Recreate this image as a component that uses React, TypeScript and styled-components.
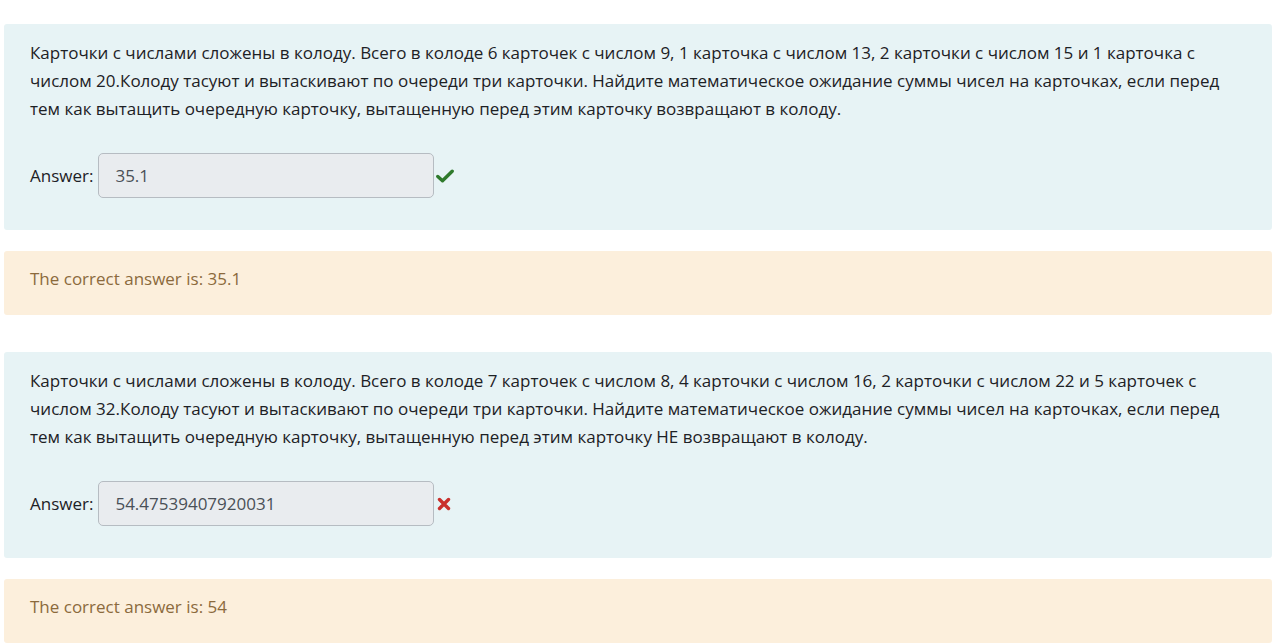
import React from 'react'
import styled, { createGlobalStyle } from 'styled-components'

const GlobalStyle = createGlobalStyle`
  html, body {
    margin: 0;
    padding: 0;
    background: #ffffff;
  }
  body {
    font-family: 'Open Sans', 'Noto Sans', 'Liberation Sans', sans-serif;
    font-size: 17px;
    color: #1d2125;
  }
`

interface QuestionProps {
  text: string
  answer: string
  correct: boolean
  rightAnswer: string
}

const questions: QuestionProps[] = [
  {
    text:
      'Карточки с числами сложены в колоду. Всего в колоде 6 карточек с числом 9, 1 карточка с числом 13, 2 карточки с числом 15 и 1 карточка с числом 20.Колоду тасуют и вытаскивают по очереди три карточки. Найдите математическое ожидание суммы чисел на карточках, если перед тем как вытащить очередную карточку, вытащенную перед этим карточку возвращают в колоду.',
    answer: '35.1',
    correct: true,
    rightAnswer: '35.1',
  },
  {
    text:
      'Карточки с числами сложены в колоду. Всего в колоде 7 карточек с числом 8, 4 карточки с числом 16, 2 карточки с числом 22 и 5 карточек с числом 32.Колоду тасуют и вытаскивают по очереди три карточки. Найдите математическое ожидание суммы чисел на карточках, если перед тем как вытащить очередную карточку, вытащенную перед этим карточку НЕ возвращают в колоду.',
    answer: '54.47539407920031',
    correct: false,
    rightAnswer: '54',
  },
]

const CheckIcon = () => (
  <svg width="18" height="16" viewBox="0 0 18 16">
    <path d="M1.8 8.5 L6.5 12.8 L16.2 3.2" fill="none" stroke="#2f7a2c" strokeWidth="3.4" strokeLinecap="round" strokeLinejoin="round" />
  </svg>
)

const CrossIcon = () => (
  <svg width="16" height="16" viewBox="0 0 16 16">
    <path d="M3.5 3.5 L12.5 12.5 M12.5 3.5 L3.5 12.5" fill="none" stroke="#c9302c" strokeWidth="3.4" strokeLinecap="round" />
  </svg>
)

const Question: React.FC<QuestionProps> = ({ text, answer, correct, rightAnswer }) => (
  <StyledQuestion>
    <Formulation>
      <QText>{text}</QText>
      <AnswerRow>
        <AnswerLabel>Answer:</AnswerLabel>
        <AnswerInput type="text" value={answer} readOnly />
        <Mark>{correct ? <CheckIcon /> : <CrossIcon />}</Mark>
      </AnswerRow>
    </Formulation>
    <Outcome>The correct answer is: {rightAnswer}</Outcome>
  </StyledQuestion>
)

export default function App() {
  return (
    <>
      <GlobalStyle />
      <Page>
        {questions.map((q, i) => (
          <Question key={i} {...q} />
        ))}
      </Page>
    </>
  )
}

const Page = styled.div`
  padding: 24px 8px 0 4px;
  display: flex;
  flex-direction: column;
  gap: 37px;
`

const StyledQuestion = styled.div`
  display: flex;
  flex-direction: column;
  gap: 21px;
`

const Formulation = styled.div`
  background: #e7f3f5;
  border-radius: 3px;
  padding: 15px 24px 32px 26px;
  color: #1d2125;
`

const QText = styled.div`
  font-size: 17px;
  line-height: 28px;
  margin-bottom: 30px;
`

const AnswerRow = styled.div`
  display: flex;
  align-items: center;
`

const AnswerLabel = styled.span`
  font-size: 17px;
  margin-right: 5px;
`

const AnswerInput = styled.input`
  box-sizing: border-box;
  width: 336px;
  height: 45px;
  padding: 0 16px;
  border: 1px solid #b6bcc2;
  border-radius: 5px;
  background: #e9ecef;
  color: #495057;
  font-family: inherit;
  font-size: 17px;
  outline: none;
`

const Mark = styled.span`
  display: flex;
  align-items: center;
  margin-left: 2px;
`

const Outcome = styled.div`
  background: #fcefdc;
  color: #8b6a3c;
  border-radius: 3px;
  padding: 14px 26px 22px 26px;
  font-size: 17px;
  line-height: 28px;
`
